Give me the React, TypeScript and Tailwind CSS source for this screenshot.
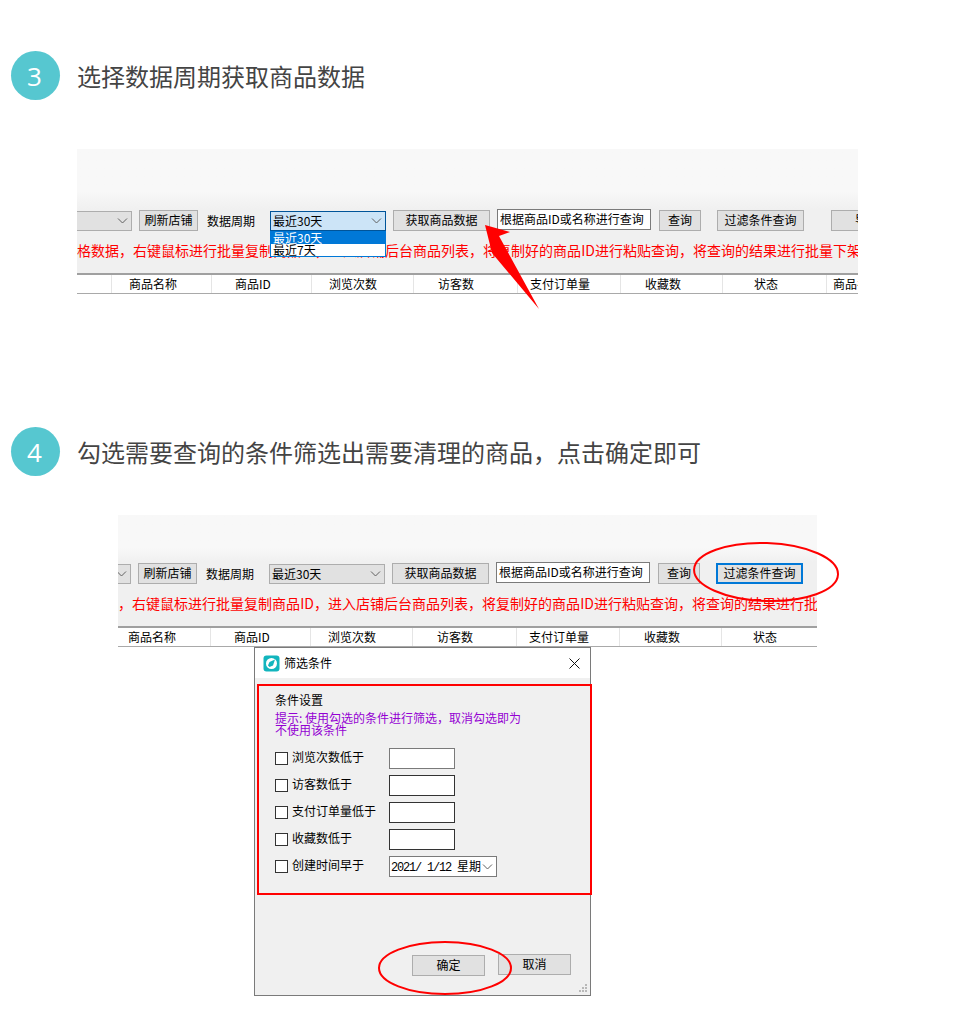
const cjk = "font-['Noto_Sans_CJK_SC','Liberation_Sans',sans-serif]";

const headers = [
  { label: "", w: "w-[35px]", pad: "pl-0" },
  { label: "商品名称", w: "w-[100px]", pad: "pl-[17px]" },
  { label: "商品ID", w: "w-[100px]", pad: "pl-[23px]" },
  { label: "浏览次数", w: "w-[102px]", pad: "pl-[17px]" },
  { label: "访客数", w: "w-[104px]", pad: "pl-[24px]" },
  { label: "支付订单量", w: "w-[103px]", pad: "pl-[12px]" },
  { label: "收藏数", w: "w-[102px]", pad: "pl-[24px]" },
  { label: "状态", w: "w-[104px]", pad: "pl-[31px]" },
  { label: "商品名称", w: "w-[80px]", pad: "pl-[6px]" },
];

const WinButton = ({
  label,
  className = "",
  border = "border border-[#adadad]",
}: {
  label: string;
  className?: string;
  border?: string;
}) => (
  <div
    className={`h-[21px] shrink-0 flex items-center justify-center pb-[1px] bg-[#e1e1e1] text-[12px] leading-none text-black ${border} ${className}`}
  >
    {label}
  </div>
);

const Chevron = ({ color = "#606060" }: { color?: string }) => (
  <svg width="11" height="6" viewBox="0 0 11 6" fill="none" className="shrink-0">
    <path d="M1 .5l4.500 4.500L10 .5" stroke={color} strokeWidth="1" />
  </svg>
);

// same toolbar twice, the second one is scrolled 42px to the right
const AppStrip = ({
  width,
  topHeight,
  scrolled,
  focused,
}: {
  width: string;
  topHeight: string;
  scrolled?: boolean;
  focused?: boolean;
}) => (
  <div className={`${width} overflow-hidden bg-[#f0f0f0]`}>
    <div className={`${topHeight} bg-linear-to-b from-[#f8f8f8] from-70% to-[#f0f0f0]`} />
    <div className={`w-[900px] ${scrolled ? "-ml-[42px]" : ""}`}>
      <div className="flex items-start h-[22px]">
        <div className="mt-[2px] w-[55px] h-[20px] shrink-0 flex items-center justify-end pr-[3px] bg-[#e1e1e1] border border-l-0 border-[#adadad]">
          <Chevron />
        </div>
        <WinButton label="刷新店铺" className="ml-[7px] mt-[1px] w-[59px]" />
        <span className="ml-[9px] mt-[4px] w-[48px] shrink-0 text-[12px] leading-[16px] text-black">数据周期</span>
        <div
          className={`relative ml-[15px] mt-[2px] w-[116px] h-[20px] shrink-0 flex items-center justify-between pl-[2px] pr-[3px] border text-[12px] text-black ${
            focused ? "bg-[#cce4f7] border-[#005499]" : "bg-[#e1e1e1] border-[#adadad]"
          }`}
        >
          <span className="leading-none">最近30天</span>
          <Chevron />
          {focused && (
            <div className="absolute left-[-1px] top-[19px] w-[116px] h-[26px] bg-white border border-[#0078d7] text-[12px] leading-[12px] z-10">
              <div className="h-[12px] bg-[#0078d7] text-white pl-[2px]">最近30天</div>
              <div className="h-[12px] text-black pl-[2px]">最近7天</div>
            </div>
          )}
        </div>
        <WinButton label="获取商品数据" className="ml-[7px] mt-[1px] w-[97px]" />
        <div className="ml-[7px] w-[154px] h-[21px] shrink-0 flex items-center pl-[2px] pb-[1px] bg-white border border-[#7a7a7a] text-[12px] leading-none text-black whitespace-nowrap">
          根据商品ID或名称进行查询
        </div>
        <WinButton label="查询" className="ml-[8px] mt-[1px] w-[42px]" />
        <WinButton
          label="过滤条件查询"
          className="ml-[16px] mt-[1px] w-[87px]"
          border={scrolled ? "border-2 border-[#0078d7]" : "border border-[#adadad]"}
        />
        <WinButton label="导出数据" className="ml-[27px] mt-[1px] w-[96px]" />
      </div>
      <div className="mt-[9px] h-[20px] text-[14px] leading-[20px] text-[#ff0000] whitespace-nowrap">
        格数据，右键鼠标进行批量复制商品<span className="inline-block w-[14px] text-center">ID</span>，进入店铺后台商品列表，将复制好的商品<span className="inline-block w-[14px] text-center">ID</span>进行粘贴查询，将查询的结果进行批量下架
      </div>
      <div className="mt-[13px] flex h-[21px] border-t-2 border-b border-t-[#a0a0a0] border-b-[#a9a9a9] bg-white">
        {headers.map((h, i) => (
          <div
            key={i}
            className={`${h.w} ${h.pad} shrink-0 border-r border-[#e5e5e5] text-[12px] leading-[18px] text-black whitespace-nowrap`}
          >
            {h.label}
          </div>
        ))}
      </div>
    </div>
  </div>
);

const StepTitle = ({ n, title, className = "" }: { n: number; title: string; className?: string }) => (
  <div className={`flex items-center ml-[11px] ${className}`}>
    <div className="w-[49px] h-[49px] rounded-full bg-[#56c7d0] flex items-center justify-center pr-[2px] text-white text-[26px] leading-none font-['Open_Sans',sans-serif]">
      {n}
    </div>
    <h2 className="ml-[17px] text-[24px] leading-[32px] font-normal text-[#444444]">{title}</h2>
  </div>
);

const FilterRow = ({ label, grey }: { label: string; grey?: boolean }) => (
  <div className="flex items-center h-[21px] mb-[6px]">
    <div className="w-[13px] h-[13px] bg-white border border-[#333333] shrink-0" />
    <span className="ml-[4px] w-[97px] pb-[3px] text-[12px] leading-none text-black">{label}</span>
    <div className={`w-[66px] h-[21px] bg-white border ${grey ? "border-[#7a7a7a]" : "border-[#333333]"}`} />
  </div>
);

const FilterDialog = () => (
  <div className="relative ml-[254px] w-[337px] h-[349px] border border-[#7a7a7a] bg-[#f0f0f0]">
    <div className="h-[30px] bg-white flex items-center pl-[8px] pr-[10px]">
      <svg width="17" height="17" viewBox="0 0 17 17" className="shrink-0">
        <rect x=".5" y=".5" width="16" height="16" rx="3" fill="#12b5bd" />
        <circle cx="8.500" cy="8.500" r="5.500" fill="#ffffff" />
        <path d="M12 4.500L6.500 7 5 10.500l1.500 1.500 3.500-1.500z" fill="#12b5bd" />
      </svg>
      <span className="ml-[4px] pb-[1px] text-[12px] leading-none text-black">筛选条件</span>
      <svg width="11" height="11" viewBox="0 0 11 11" className="ml-auto" fill="none">
        <path d="M.5.500l10 10M10.500.500l-10 10" stroke="#111111" strokeWidth="1" />
      </svg>
    </div>
    <div className="ml-[2px] -mr-[2px] mt-[6px] h-[211px] border-2 border-[#ff0000] pl-[16px] pt-[7px]">
      <div className="text-[12px] leading-[14px] text-black">条件设置</div>
      <div className="mt-[5px] w-[250px] text-[12px] leading-[12px] text-[#9400d3]">
        提示<span className="inline-block w-[6px]">:</span>使用勾选的条件进行筛选，取消勾选即为不使用该条件
      </div>
      <div className="mt-[12px]">
        <FilterRow label="浏览次数低于" grey />
        <FilterRow label="访客数低于" />
        <FilterRow label="支付订单量低于" />
        <FilterRow label="收藏数低于" />
        <div className="flex items-center h-[21px]">
          <div className="w-[13px] h-[13px] bg-white border border-[#333333] shrink-0" />
          <span className="ml-[4px] w-[97px] pb-[3px] text-[12px] leading-none text-black">创建时间早于</span>
          <div className="w-[108px] h-[21px] bg-white border border-[#7a7a7a] flex items-center pl-[1px] pr-[3px]">
            <span className="w-[90px] overflow-hidden whitespace-nowrap text-[12px] leading-none text-black">
              <span className="tracking-[-1.200px] font-['Liberation_Mono',monospace] whitespace-pre">2021/ 1/12 </span>星期
            </span>
            <div className="ml-auto"><Chevron /></div>
          </div>
        </div>
      </div>
    </div>
    <div className="mt-[59px] flex items-start pl-[157px]">
      <WinButton label="确定" className="mt-[1px] w-[73px]" />
      <WinButton label="取消" className="ml-[13px] w-[73px]" />
    </div>
    {/* resize grip */}
    <svg width="9" height="9" viewBox="0 0 9 9" className="absolute right-[2px] bottom-[2px]" fill="#b8b8b8">
      <rect x="6" y="0" width="2" height="2" />
      <rect x="3" y="3" width="2" height="2" />
      <rect x="6" y="3" width="2" height="2" />
      <rect x="0" y="6" width="2" height="2" />
      <rect x="3" y="6" width="2" height="2" />
      <rect x="6" y="6" width="2" height="2" />
    </svg>
    {/* red ring round the OK button */}
    <svg width="136" height="56" viewBox="0 0 136 56" fill="none" className="absolute left-[122px] top-[292px]">
      <ellipse cx="68" cy="28" rx="66" ry="26" stroke="#ff0000" strokeWidth="2" />
    </svg>
  </div>
);

export default function App() {
  return (
    <div className={`relative w-[980px] h-[1031px] bg-white overflow-hidden ${cjk}`}>
      <StepTitle n={3} title="选择数据周期获取商品数据" className="pt-[51px]" />
      <div className="relative ml-[77px] mt-[49px] w-[781px]">
        <AppStrip width="w-[781px]" topHeight="h-[60px]" focused />
        {/* arrow */}
        <svg width="70" height="100" viewBox="0 0 70 100" className="absolute left-[400px] top-[70px] z-20">
          <path d="M8 6L33 13 22 17 62 90 15 34z" fill="#ff0000" />
        </svg>
      </div>
      <StepTitle n={4} title="勾选需要查询的条件筛选出需要清理的商品，点击确定即可" className="mt-[133px]" />
      <div className="relative ml-[118px] mt-[39px] w-[699px]">
        <AppStrip width="w-[699px]" topHeight="h-[47px]" scrolled />
        <svg width="150" height="64" viewBox="0 0 150 64" fill="none" className="absolute left-[574px] top-[26px] z-20">
          <ellipse cx="74" cy="31" rx="72" ry="29" stroke="#ff0000" strokeWidth="2" transform="rotate(2 74 32)" />
        </svg>
      </div>
      <FilterDialog />
    </div>
  );
}
